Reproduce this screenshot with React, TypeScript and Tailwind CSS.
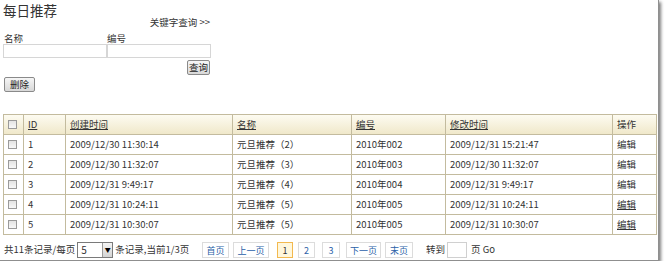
import React from "react"

const rows = [
  { id: 1, created: "2009/12/30 11:30:14", name: "元旦推荐（2）", code: "2010年002", modified: "2009/12/31 15:21:47", link: false },
  { id: 2, created: "2009/12/30 11:32:07", name: "元旦推荐（3）", code: "2010年003", modified: "2009/12/30 11:32:07", link: false },
  { id: 3, created: "2009/12/31 9:49:17", name: "元旦推荐（4）", code: "2010年004", modified: "2009/12/31 9:49:17", link: false },
  { id: 4, created: "2009/12/31 10:24:11", name: "元旦推荐（5）", code: "2010年005", modified: "2009/12/31 10:24:11", link: true },
  { id: 5, created: "2009/12/31 10:30:07", name: "元旦推荐（5）", code: "2010年005", modified: "2009/12/31 10:30:07", link: true },
]

const Check = () => (
  <span className="inline-block w-[9px] h-[9px] border border-[#9a9a9a] bg-gradient-to-b from-[#e4e4e4] to-[#f8f8f8] align-middle" />
)

const GrayButton: React.FC<{ label: string; className?: string }> = ({ label, className }) => (
  <button
    className={
      "h-[15px] border border-[#8a8a8a] rounded-[2px] bg-gradient-to-b from-[#f6f6f6] to-[#d8d8d8] text-[9.5px] leading-[13px] text-[#222] " +
      (className ?? "")
    }
  >
    {label}
  </button>
)

const PageBtn: React.FC<{ label: string; className: string; active?: boolean }> = ({ label, className, active }) => (
  <span
    className={
      "h-[16px] flex items-center justify-center text-[9px] border " +
      className +
      (active
        ? " border-[#f3b94f] bg-[#fff7dc] text-[#333]"
        : " border-[#dcdcdc] bg-white text-[#2b5fa8]")
    }
  >
    {label}
  </span>
)

const cell = "border border-[#c3bb9e] px-[4px] h-[20px] text-left font-normal"

export default function App() {
  return (
    <div className="w-[659px] h-[261px] bg-white border-r border-b border-[#8f8f8f] shadow-[2px_2px_3px_rgba(0,0,0,0.5)] text-[#333] font-['Noto_Sans_CJK_SC',sans-serif] text-[9.5px] leading-none">
      <div className="pl-[3px] pt-[3px]">
        <h1 className="text-[13.5px] leading-[14px] text-[#333]">每日推荐</h1>
        <div className="w-[208px] flex flex-col">
          <div className="self-end text-[9.5px] leading-[10px] mr-[1px]">关键字查询 &gt;&gt;</div>
          <div className="flex mt-[6px]">
            <div className="w-[105px] flex flex-col">
              <span className="pl-[1px] leading-[10px]">名称</span>
              <span className="mt-[1px] h-[14px] w-[104px] border border-[#d6d6d6] bg-white" />
            </div>
            <div className="w-[104px] flex flex-col">
              <span className="leading-[10px]">编号</span>
              <span className="mt-[1px] h-[14px] w-[104px] border border-[#d6d6d6] bg-white" />
            </div>
          </div>
          <div className="self-end mt-[2px] mr-[1px]">
            <GrayButton label="查询" className="w-[23px]" />
          </div>
        </div>
        <div className="mt-[2px] ml-[1px]">
          <GrayButton label="删除" className="w-[31px]" />
        </div>

        <table className="mt-[22px] w-[653px] border-collapse border border-[#c3bb9e] table-fixed">
          <colgroup>
            <col className="w-[20px]" />
            <col className="w-[42px]" />
            <col className="w-[167px]" />
            <col className="w-[119px]" />
            <col className="w-[94px]" />
            <col className="w-[167px]" />
            <col className="w-[44px]" />
          </colgroup>
          <thead>
            <tr className="bg-gradient-to-b from-[#fdfbf1] to-[#efe7c8]">
              <th className={cell}><Check /></th>
              <th className={cell}><span className="underline">ID</span></th>
              <th className={cell}><span className="underline">创建时间</span></th>
              <th className={cell}><span className="underline">名称</span></th>
              <th className={cell}><span className="underline">编号</span></th>
              <th className={cell}><span className="underline">修改时间</span></th>
              <th className={cell}>操作</th>
            </tr>
          </thead>
          <tbody>
            {rows.map((r) => (
              <tr key={r.id} className="bg-white">
                <td className={cell}><Check /></td>
                <td className={cell}>{r.id}</td>
                <td className={cell}>{r.created}</td>
                <td className={cell}>{r.name}</td>
                <td className={cell}>{r.code}</td>
                <td className={cell}>{r.modified}</td>
                <td className={cell}>
                  <span className={r.link ? "underline" : ""}>编辑</span>
                </td>
              </tr>
            ))}
          </tbody>
        </table>

        <div className="flex items-center mt-[7px] h-[16px]">
          <div className="w-[199px] flex items-center">
            <span className="ml-[1px]">共11条记录/每页</span>
            <span className="ml-[2px] w-[36px] h-[16px] border border-[#7a7a7a] flex items-center bg-white">
              <span className="flex-1 pl-[3px] text-[10px]">5</span>
              <span className="w-[10px] h-full bg-gradient-to-b from-[#f4f4f4] to-[#d4d4d4] border-l border-[#9a9a9a] flex items-center justify-center text-[6px] text-black">▼</span>
            </span>
            <span className="ml-[2px]">条记录,当前1/3页</span>
          </div>
          <PageBtn label="首页" className="w-[27px]" />
          <PageBtn label="上一页" className="ml-[4px] w-[36px]" />
          <PageBtn label="1" className="ml-[8px] w-[16px]" active />
          <PageBtn label="2" className="ml-[5px] w-[17px]" />
          <PageBtn label="3" className="ml-[7px] w-[18px]" />
          <PageBtn label="下一页" className="ml-[6px] w-[35px]" />
          <PageBtn label="末页" className="ml-[4px] w-[28px]" />
          <span className="ml-[13px] w-[21px]">转到</span>
          <span className="w-[20px] h-[16px] border border-[#d0d0d0] bg-white" />
          <span className="ml-[4px]">页 Go</span>
        </div>
      </div>
    </div>
  )
}
